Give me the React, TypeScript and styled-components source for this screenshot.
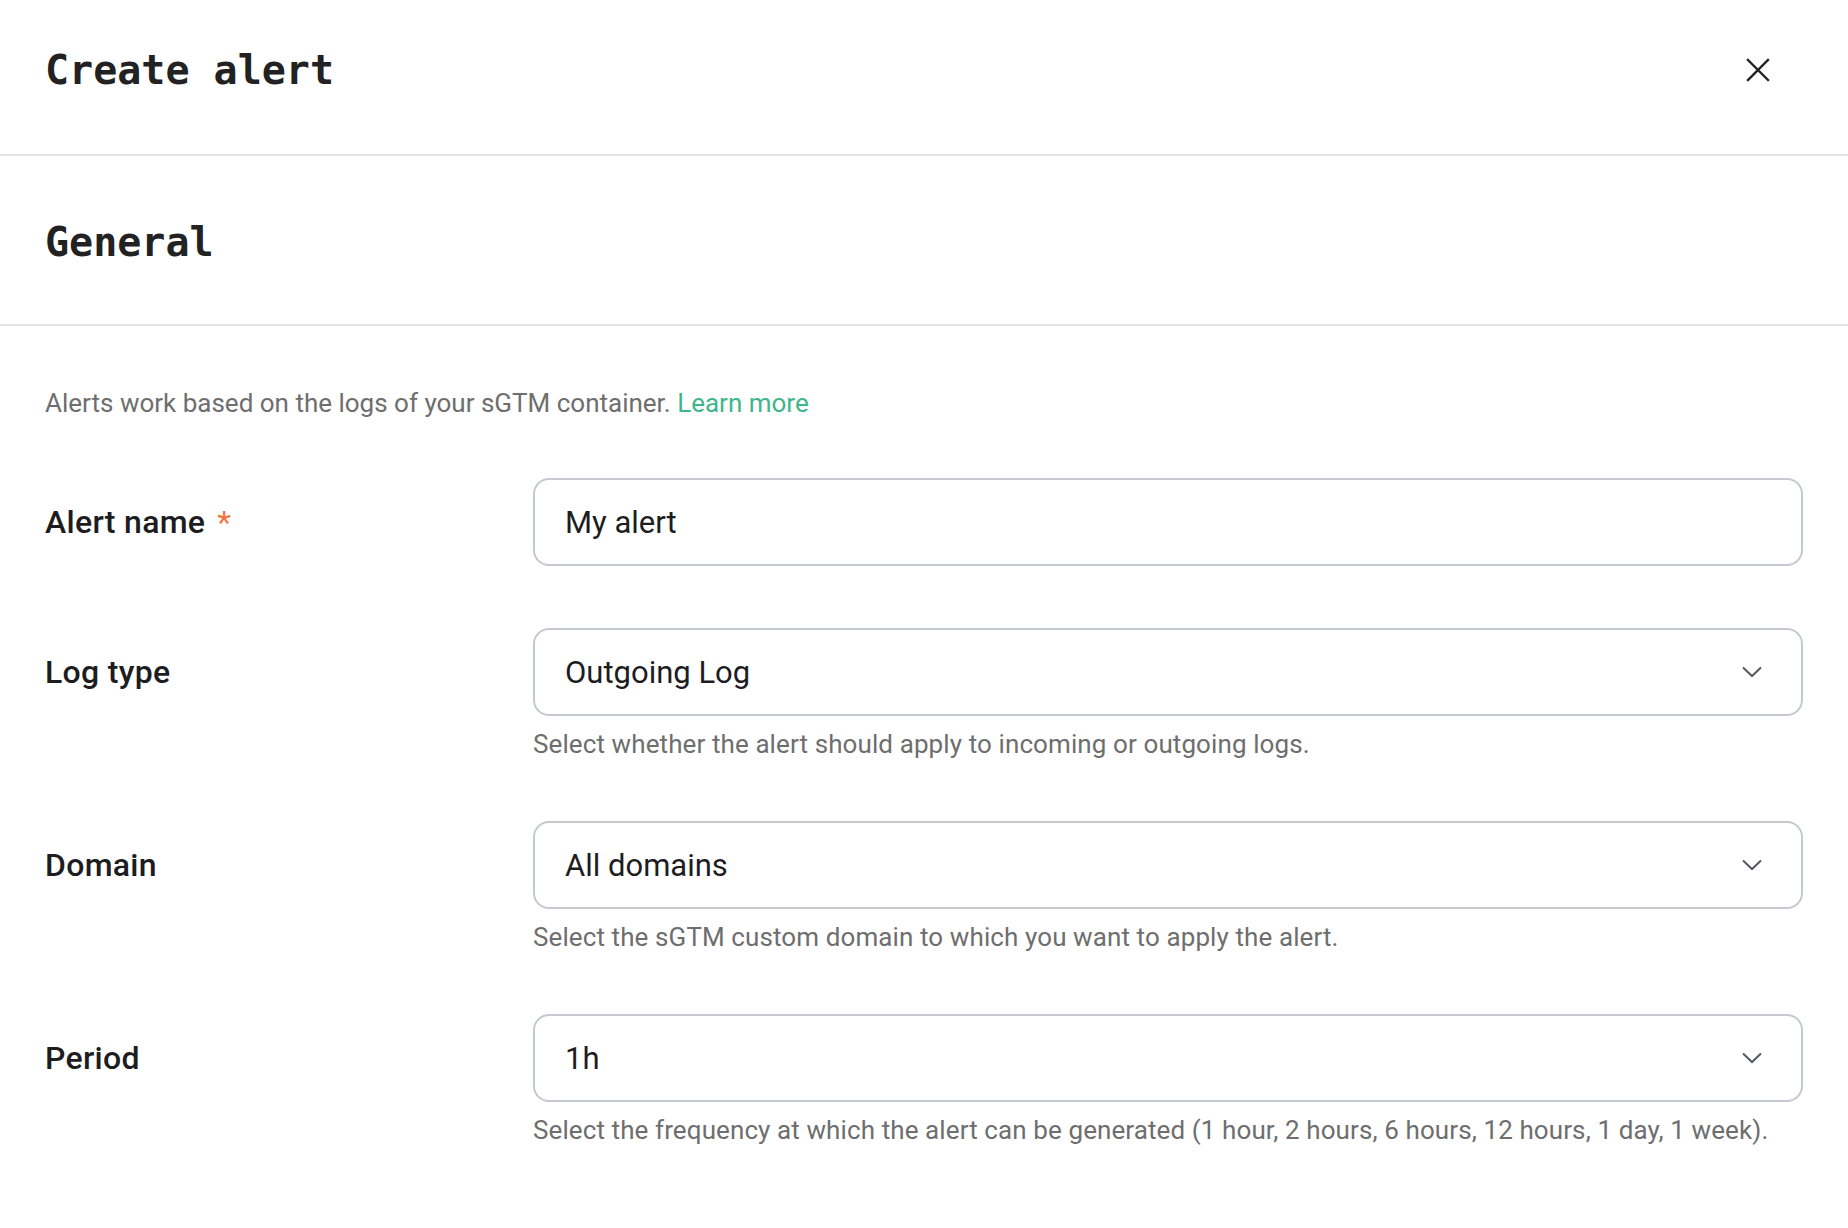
import styled, { createGlobalStyle } from "styled-components";

const COLOR_TEXT = "#1d1d1f";
const COLOR_MUTED = "#6e6e6e";
const COLOR_LINE = "#e3e3e6";
const COLOR_BORDER = "#c4c9d0";
const COLOR_LINK = "#3fb68a";
const COLOR_REQUIRED = "#f4733c";

const GlobalStyle = createGlobalStyle`
  html, body {
    margin: 0;
    padding: 0;
    background: #ffffff;
  }
  body {
    font-family: Roboto, "Liberation Sans", Arial, sans-serif;
    color: ${ COLOR_TEXT };
  }
  * {
    box-sizing: border-box;
  }
`

const Page = styled.div`
  width: 100%;
  min-height: 100vh;
  background: #ffffff;
`

const Header = styled.header`
  display: flex;
  align-items: center;
  justify-content: space-between;
  height: 156px;
  padding: 47px 78px 61px 45px;
  border-bottom: 2px solid ${ COLOR_LINE };
`

const MonoTitle = styled.h1`
  margin: 0;
  font-family: "DejaVu Sans Mono", "Liberation Mono", monospace;
  font-weight: 700;
  font-size: 40px;
  line-height: 48px;
  letter-spacing: 0;
  color: #222222;
`

const CloseButton = styled.button`
  display: flex;
  align-items: center;
  justify-content: center;
  width: 24px;
  height: 24px;
  padding: 0;
  border: none;
  background: transparent;
  cursor: pointer;
  color: #222222;
`

const SectionHeader = styled.div`
  display: flex;
  align-items: center;
  height: 170px;
  padding: 4px 45px 0 45px;
  border-bottom: 2px solid ${ COLOR_LINE };
`

const Body = styled.div`
  padding: 59px 45px 80px 45px;
`

const Intro = styled.p`
  margin: 0 0 57px 0;
  font-size: 26px;
  line-height: 36px;
  color: ${ COLOR_MUTED };
`

const Link = styled.a`
  color: ${ COLOR_LINK };
  text-decoration: none;
`

const Fields = styled.div`
  display: flex;
  flex-direction: column;
  gap: 62px;
`

const Row = styled.div`
  display: grid;
  grid-template-columns: 488px 1fr;
  align-items: start;
`

const Label = styled.label`
  display: flex;
  align-items: center;
  gap: 12px;
  height: 88px;
  font-size: 32px;
  font-weight: 500;
  letter-spacing: 0.3px;
  color: ${ COLOR_TEXT };
`

const Required = styled.span`
  color: ${ COLOR_REQUIRED };
  font-weight: 400;
`

const Control = styled.div`
  display: flex;
  flex-direction: column;
`

const TextInput = styled.input`
  width: 100%;
  height: 88px;
  padding: 0 30px;
  border: 2px solid ${ COLOR_BORDER };
  border-radius: 16px;
  font-family: Roboto, "Liberation Sans", Arial, sans-serif;
  font-size: 31px;
  color: ${ COLOR_TEXT };
  background: #ffffff;
  outline: none;
`

const SelectBox = styled.div`
  display: flex;
  align-items: center;
  justify-content: space-between;
  height: 88px;
  padding: 0 38px 0 30px;
  border: 2px solid ${ COLOR_BORDER };
  border-radius: 16px;
  font-size: 31px;
  color: ${ COLOR_TEXT };
  background: #ffffff;
  cursor: pointer;
`

const Helper = styled.div`
  margin-top: 13px;
  font-size: 26px;
  line-height: 30px;
  letter-spacing: 0.1px;
  color: ${ COLOR_MUTED };
`

const CloseIcon = () => (
  <svg width="24" height="24" viewBox="0 0 24 24" fill="none">
    <path d="M2 2 L22 22 M22 2 L2 22" stroke="currentColor" strokeWidth="2.4" strokeLinecap="square"/>
  </svg>
)

const ChevronDown = () => (
  <svg width="22" height="12" viewBox="0 0 22 12" fill="none">
    <path d="M2 1.5 L11 10 L20 1.5" stroke="#555a60" strokeWidth="2" strokeLinejoin="miter"/>
  </svg>
)

type SelectFieldProps = {
  label: string,
  value: string,
  helper: string
}

const SelectField = ({label, value, helper}: SelectFieldProps) => (
  <Row>
    <Label>{ label }</Label>
    <Control>
      <SelectBox role="combobox">
        <span>{ value }</span>
        <ChevronDown/>
      </SelectBox>
      <Helper>{ helper }</Helper>
    </Control>
  </Row>
)

export default function App() {
  return (
    <Page>
      <GlobalStyle/>
      <Header>
        <MonoTitle>Create alert</MonoTitle>
        <CloseButton aria-label="Close">
          <CloseIcon/>
        </CloseButton>
      </Header>

      <SectionHeader>
        <MonoTitle as="h2">General</MonoTitle>
      </SectionHeader>

      <Body>
        <Intro>
          Alerts work based on the logs of your sGTM container. <Link href="#">Learn more</Link>
        </Intro>

        <Fields>
          <Row>
            <Label htmlFor="alert-name">
              Alert name <Required>*</Required>
            </Label>
            <Control>
              <TextInput id="alert-name" defaultValue="My alert"/>
            </Control>
          </Row>

          <SelectField
            label="Log type"
            value="Outgoing Log"
            helper="Select whether the alert should apply to incoming or outgoing logs."
          />
          <SelectField
            label="Domain"
            value="All domains"
            helper="Select the sGTM custom domain to which you want to apply the alert."
          />
          <SelectField
            label="Period"
            value="1h"
            helper="Select the frequency at which the alert can be generated (1 hour, 2 hours, 6 hours, 12 hours, 1 day, 1 week)."
          />
        </Fields>
      </Body>
    </Page>
  );
}
